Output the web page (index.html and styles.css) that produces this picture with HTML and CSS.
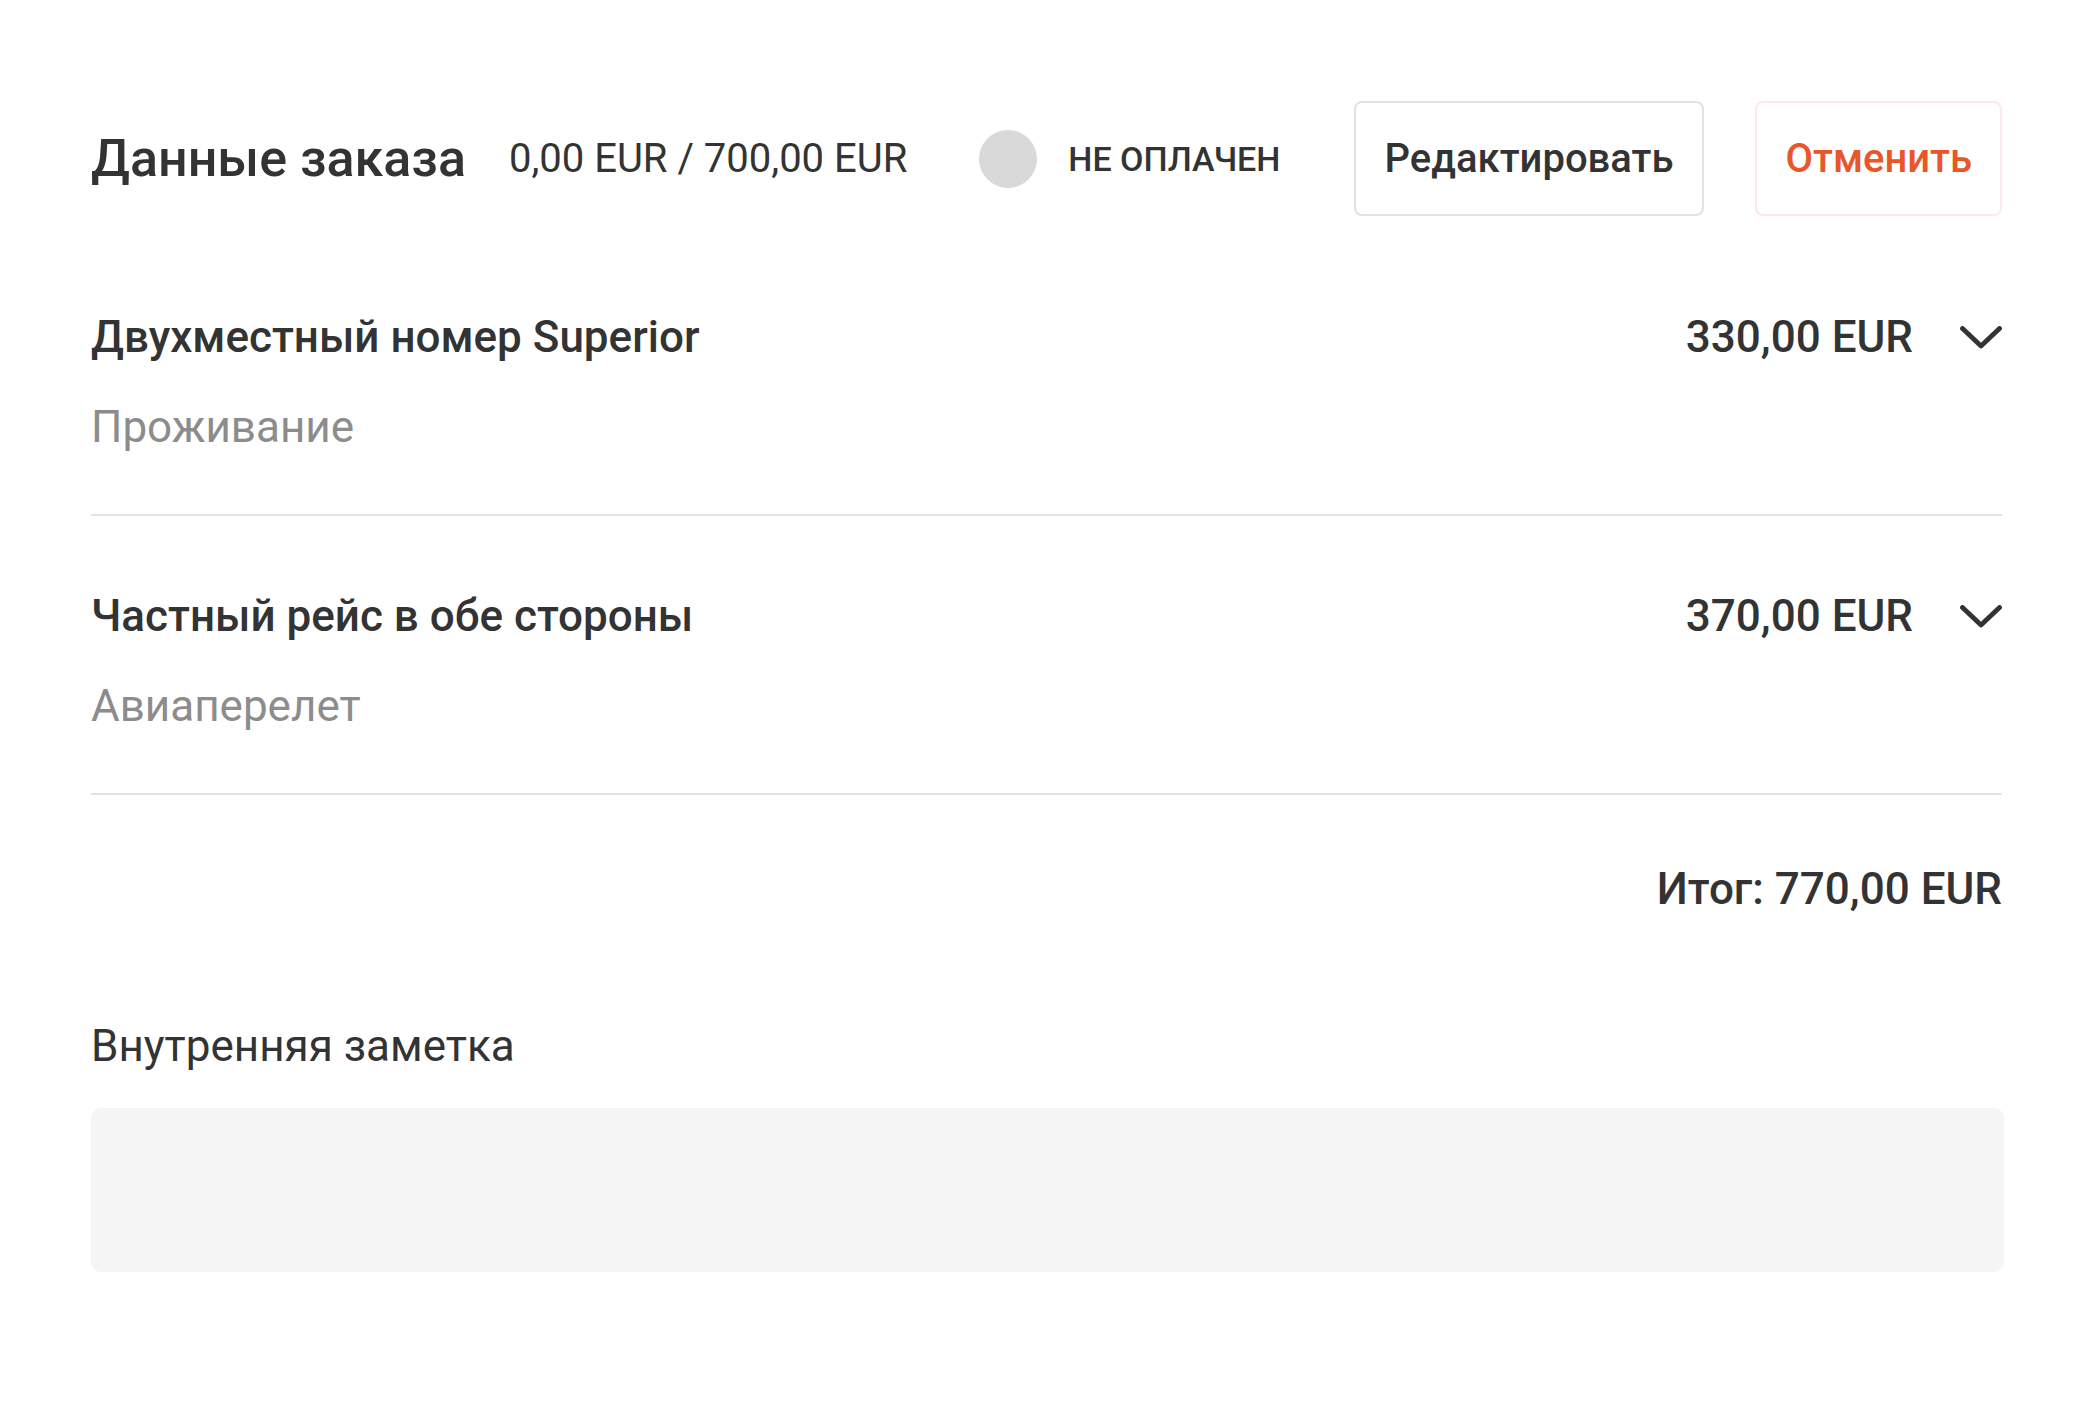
FILE: index.html
```html
<!DOCTYPE html>
<html lang="ru">
<head>
<meta charset="utf-8">
<title>Данные заказа</title>
<link rel="stylesheet" href="styles.css">
</head>
<body>
<main class="order">
  <header class="order-header">
    <h1 class="order-title">Данные заказа</h1>
    <span class="order-paid">0,00 EUR / 700,00 EUR</span>
    <span class="status"><span class="status-dot"></span><span class="status-text">НЕ ОПЛАЧЕН</span></span>
    <div class="actions">
      <button class="btn btn-edit" type="button">Редактировать</button>
      <button class="btn btn-cancel" type="button">Отменить</button>
    </div>
  </header>

  <section class="item">
    <div class="item-main">
      <div class="item-name">Двухместный номер Superior</div>
      <div class="item-price">330,00 EUR</div>
      <svg class="chevron" viewBox="0 0 42 23" width="42" height="23" aria-hidden="true"><polyline points="2.5,2.5 21,20 39.5,2.5" fill="none" stroke="#333" stroke-width="4.8" stroke-linecap="round" stroke-linejoin="round"/></svg>
    </div>
    <div class="item-type">Проживание</div>
  </section>

  <section class="item">
    <div class="item-main">
      <div class="item-name">Частный рейс в обе стороны</div>
      <div class="item-price">370,00 EUR</div>
      <svg class="chevron" viewBox="0 0 42 23" width="42" height="23" aria-hidden="true"><polyline points="2.5,2.5 21,20 39.5,2.5" fill="none" stroke="#333" stroke-width="4.8" stroke-linecap="round" stroke-linejoin="round"/></svg>
    </div>
    <div class="item-type">Авиаперелет</div>
  </section>

  <div class="total">Итог: 770,00 EUR</div>

  <div class="note">
    <label class="note-label" for="note">Внутренняя заметка</label>
    <textarea class="note-input" id="note"></textarea>
  </div>
</main>
</body>
</html>
```
FILE: styles.css
```css
* { box-sizing: border-box; }

html, body {
  margin: 0;
  padding: 0;
  background: #ffffff;
}

body {
  font-family: Roboto, "Noto Sans", "Liberation Sans", sans-serif;
  color: #333333;
}

.order {
  padding: 101px 90px 0 91px;
}

.order-header {
  display: flex;
  align-items: center;
  height: 115px;
}

.order-title {
  margin: 0;
  font-size: 52px;
  font-weight: 500;
  line-height: 60px;
  color: #333333;
}

.order-paid {
  margin-left: 43px;
  font-size: 40px;
  font-weight: 400;
  line-height: 48px;
  color: #333333;
}

.status {
  display: flex;
  align-items: center;
  margin-left: 72px;
}

.status-dot {
  width: 58px;
  height: 58px;
  border-radius: 50%;
  background: #d9d9d9;
}

.status-text {
  margin-left: 31px;
  font-size: 34px;
  font-weight: 500;
  line-height: 40px;
  color: #333333;
}

.actions {
  display: flex;
  gap: 51px;
  margin-left: auto;
}

.btn {
  height: 115px;
  padding: 0 29px;
  font-family: inherit;
  font-size: 40px;
  font-weight: 500;
  background: #ffffff;
  border-radius: 8px;
  cursor: pointer;
}

.btn-edit {
  border: 2px solid #e2e2e2;
  color: #333333;
}

.btn-cancel {
  padding: 0 28px;
  border: 2px solid #fde8e6;
  color: #e8562a;
}

.item {
  padding: 74px 0 61px;
  border-bottom: 2px solid #e3e3e3;
}

.item:first-of-type {
  margin-top: 21px;
}

.item-main {
  display: flex;
  align-items: center;
}

.item-name {
  flex: 1;
  font-size: 44px;
  font-weight: 500;
  line-height: 52px;
}

.item-price {
  font-size: 44px;
  font-weight: 500;
  line-height: 52px;
}

.chevron {
  margin-left: 47px;
  display: block;
}

.item-type {
  margin-top: 38px;
  font-size: 44px;
  font-weight: 400;
  line-height: 52px;
  color: #8c8c8c;
}

.total {
  margin-top: 68px;
  text-align: right;
  font-size: 44px;
  font-weight: 500;
  line-height: 52px;
}

.note {
  margin-top: 105px;
}

.note-label {
  display: block;
  font-size: 44px;
  font-weight: 400;
  line-height: 52px;
  color: #333333;
}

.note-input {
  display: block;
  width: calc(100% + 2px);
  height: 164px;
  margin-top: 36px;
  border: none;
  border-radius: 10px;
  background: #f5f5f5;
  resize: none;
  outline: none;
  font-family: inherit;
  font-size: 40px;
}
```
